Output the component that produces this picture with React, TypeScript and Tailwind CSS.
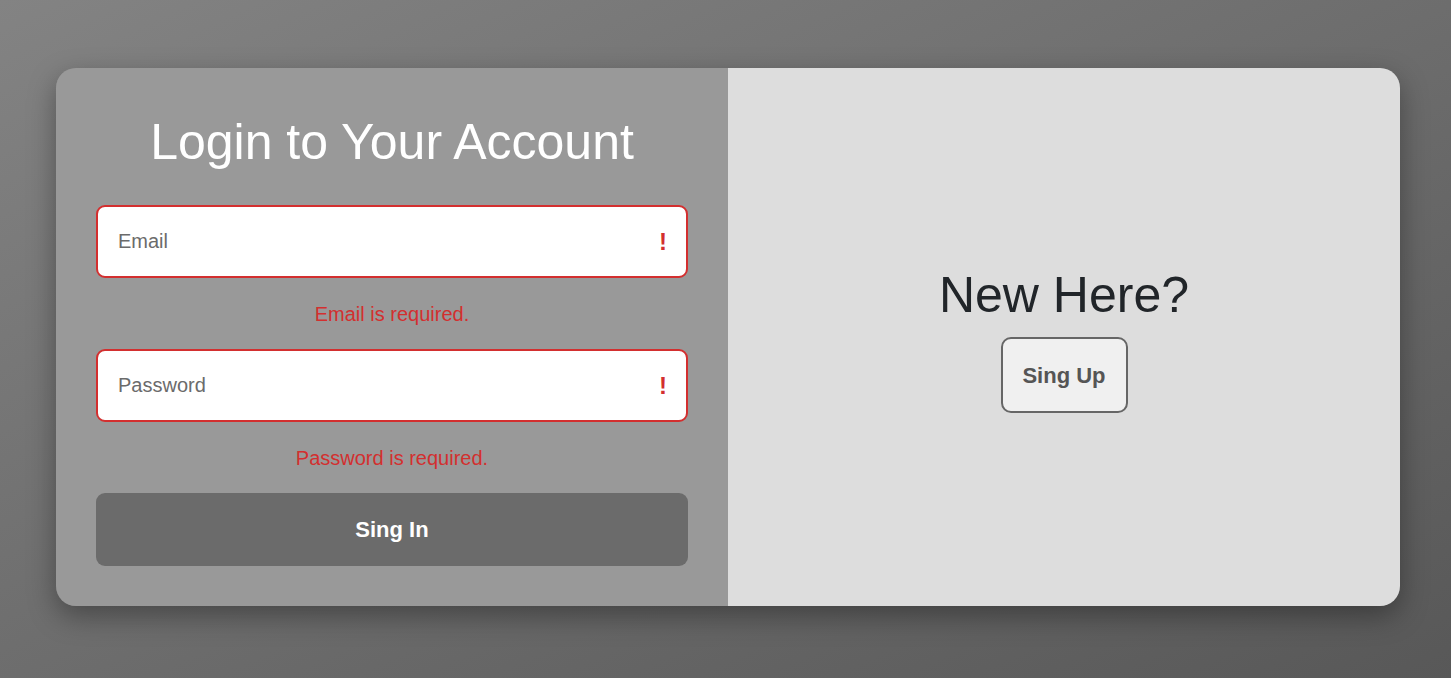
import React, { useState } from "react";

const font = { fontFamily: '"Liberation Sans", Arial, sans-serif' };

interface FieldProps {
  type: string;
  placeholder: string;
  value: string;
  onChange: (v: string) => void;
  error: string;
}

const Field: React.FC<FieldProps> = ({ type, placeholder, value, onChange, error }) => (
  <div>
    <div className="relative">
      <input
        type={type}
        value={value}
        onChange={(e) => onChange(e.target.value)}
        placeholder={placeholder}
        className="block w-full h-[73px] pl-5 pr-12 bg-white border-2 border-[#d32f2f] rounded-[9px] text-[20px] text-[#333] placeholder:text-[#6b6b6b] outline-none"
      />
      <span className="absolute right-[21px] top-1/2 -translate-y-1/2 text-[24px] font-bold text-[#d32f2f] leading-none">
        !
      </span>
    </div>
    {error && (
      <p className="h-[71px] flex items-center justify-center text-[20px] text-[#d32f2f]">
        {error}
      </p>
    )}
  </div>
);

export default function App() {
  const [email, setEmail] = useState("");
  const [password, setPassword] = useState("");

  return (
    <div
      className="h-[678px] w-full bg-linear-to-br from-[#838383] to-[#585858] pt-[68px] pl-[56px] overflow-hidden"
      style={font}
    >
      <div className="flex w-[1344px] h-[538px] rounded-[20px] overflow-hidden shadow-[0_10px_28px_rgba(0,0,0,0.35)]">
        {/* 登录 */}
        <div className="w-1/2 bg-[#999999] px-10 pt-[46px]">
          <h1 className="text-center text-white text-[50px] leading-[57px] mb-[34px]">
            Login to Your Account
          </h1>
          <Field
            type="email"
            placeholder="Email"
            value={email}
            onChange={setEmail}
            error="Email is required."
          />
          <Field
            type="password"
            placeholder="Password"
            value={password}
            onChange={setPassword}
            error="Password is required."
          />
          <button className="w-full h-[73px] bg-[#6b6b6b] rounded-[9px] text-white text-[22px] font-bold">
            Sing In
          </button>
        </div>

        {/* 注册 */}
        <div className="w-1/2 bg-[#dddddd] flex flex-col items-center justify-center pt-[6px]">
          <h2 className="text-[50px] leading-[57px] text-[#212529] mb-[13px]">New Here?</h2>
          <button className="w-[127px] h-[76px] bg-[#f0f0f0] border-2 border-[#666666] rounded-[10px] text-[22px] font-bold text-[#555555]">
            Sing Up
          </button>
        </div>
      </div>
    </div>
  );
}
